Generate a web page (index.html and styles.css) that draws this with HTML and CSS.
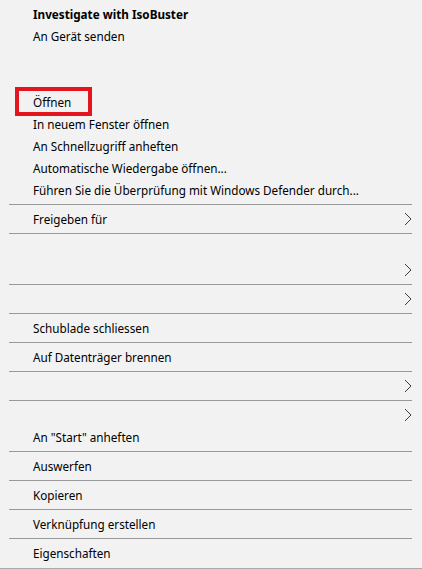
FILE: index.html
```html
<!DOCTYPE html>
<html lang="de">
<head>
  <meta charset="UTF-8" />
  <meta name="viewport" content="width=device-width, initial-scale=1.0"/>
  <title>Kontextmenü</title>
  <link rel="stylesheet" href="styles.css">
</head>
<body>
  <div class="menu">
    <div class="item bold">Investigate with IsoBuster</div>
    <div class="item">An Gerät senden</div>
    <div class="item"></div>
    <div class="item"></div>
    <div class="item highlight">Öffnen</div>
    <div class="item">In neuem Fenster öffnen</div>
    <div class="item">An Schnellzugriff anheften</div>
    <div class="item">Automatische Wiedergabe öffnen...</div>
    <div class="item">Führen Sie die Überprüfung mit Windows Defender durch...</div>
    <div class="sep"></div>
    <div class="item sub">Freigeben für
      <svg class="arrow" viewBox="0 0 8 14"><polyline points="1,1 7,7 1,13"/></svg>
    </div>
    <div class="sep"></div>
    <div class="item"></div>
    <div class="item sub">
      <svg class="arrow" viewBox="0 0 8 14"><polyline points="1,1 7,7 1,13"/></svg>
    </div>
    <div class="sep"></div>
    <div class="item sub">
      <svg class="arrow" viewBox="0 0 8 14"><polyline points="1,1 7,7 1,13"/></svg>
    </div>
    <div class="sep"></div>
    <div class="item">Schublade schliessen</div>
    <div class="sep"></div>
    <div class="item">Auf Datenträger brennen</div>
    <div class="sep"></div>
    <div class="item sub">
      <svg class="arrow" viewBox="0 0 8 14"><polyline points="1,1 7,7 1,13"/></svg>
    </div>
    <div class="sep"></div>
    <div class="item sub">
      <svg class="arrow" viewBox="0 0 8 14"><polyline points="1,1 7,7 1,13"/></svg>
    </div>
    <div class="item">An "Start" anheften</div>
    <div class="sep"></div>
    <div class="item">Auswerfen</div>
    <div class="sep"></div>
    <div class="item">Kopieren</div>
    <div class="sep"></div>
    <div class="item">Verknüpfung erstellen</div>
    <div class="sep"></div>
    <div class="item">Eigenschaften</div>
  </div>
</body>
</html>
```

FILE: styles.css
```css
* { margin: 0; padding: 0; box-sizing: border-box; }
body {
  font-family: "Noto Sans", "Open Sans", sans-serif;
  font-size: 11.7px;
  color: #000;
  background: #f2f2f2;
}
.menu {
  height: 569px;
  padding-top: 3px;
  overflow: hidden;
  border-bottom: 1px solid #a9a9a9;
}
.item {
  position: relative;
  height: 22px;
  line-height: 22px;
  padding-left: 33px;
  white-space: nowrap;
}
.item.bold { font-weight: bold; }
.item.highlight::before {
  content: "";
  box-sizing: border-box;
  position: absolute;
  left: 15px;
  top: -4px;
  width: 77px;
  height: 29px;
  border: 4px solid #e3151f;
}
.sub { display: flex; align-items: center; }
.arrow {
  width: 8px;
  height: 14px;
  margin-left: auto;
  margin-right: 10px;
  fill: none;
  stroke: #3c3c3c;
  stroke-width: 1;
}
.sep {
  height: 7px;
  padding-top: 3px;
  margin: 0 10px 0 9px;
}
.sep::after {
  content: "";
  display: block;
  height: 1px;
  background: #999;
}
```
